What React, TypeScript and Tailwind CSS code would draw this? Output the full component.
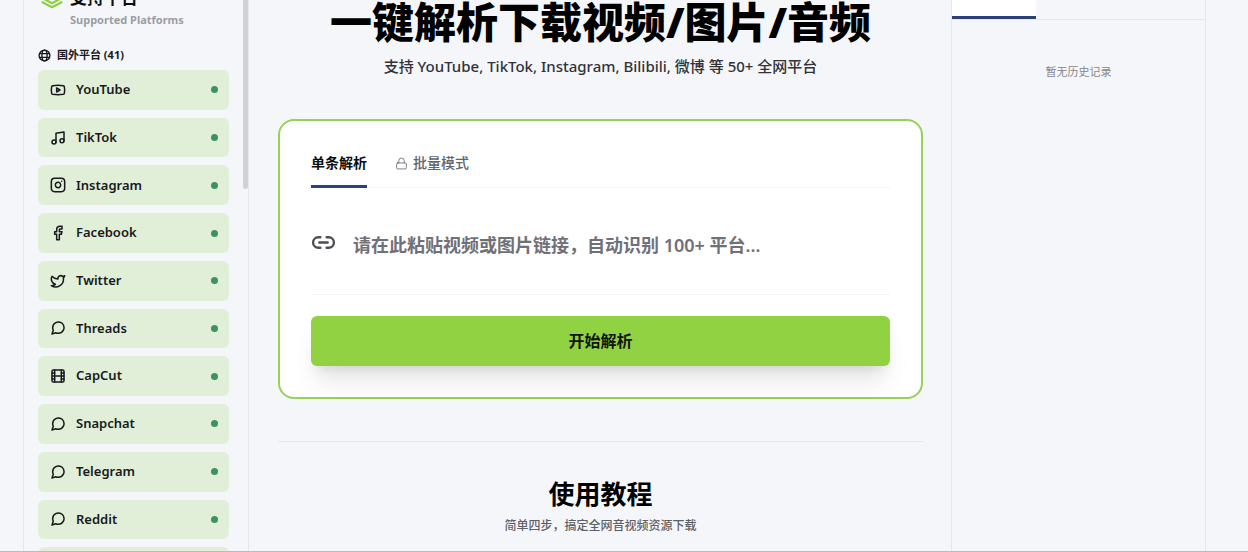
import { useState } from "react";
import { Facebook, Film, Instagram, Link2, Lock, Music, Twitter, Youtube } from "lucide-react";

type IconProps = { className?: string; strokeWidth?: number };

function ChatBubble({ className, strokeWidth = 2 }: IconProps) {
  return (
    <svg
      viewBox="0 0 24 24"
      className={className}
      fill="none"
      stroke="currentColor"
      strokeWidth={strokeWidth}
      strokeLinecap="round"
      strokeLinejoin="round"
    >
      <path d="M21 11.5a8.38 8.38 0 0 1-.9 3.8 8.5 8.5 0 0 1-7.6 4.700 8.38 8.38 0 0 1-3.800-.9L3 21l1.900-5.700a8.38 8.38 0 0 1-.9-3.800 8.5 8.5 0 0 1 4.700-7.600 8.38 8.38 0 0 1 3.800-.9h.5a8.48 8.48 0 0 1 8 8v.5z" />
    </svg>
  );
}

const platforms = [
  { name: "YouTube", Icon: Youtube },
  { name: "TikTok", Icon: Music },
  { name: "Instagram", Icon: Instagram },
  { name: "Facebook", Icon: Facebook },
  { name: "Twitter", Icon: Twitter },
  { name: "Threads", Icon: ChatBubble },
  { name: "CapCut", Icon: Film },
  { name: "Snapchat", Icon: ChatBubble },
  { name: "Telegram", Icon: ChatBubble },
  { name: "Reddit", Icon: ChatBubble },
];

function LayersLogo() {
  return (
    <svg
      viewBox="0 0 24 24"
      className="size-6 text-[#8fd043]"
      fill="none"
      stroke="currentColor"
      strokeWidth="2.2"
      strokeLinecap="round"
      strokeLinejoin="round"
    >
      <path d="M12 3 2.5 8l9.500 5 9.500-5z" />
      <path d="m2.500 12.200 9.500 5 9.500-5" />
      <path d="m2.500 16.200 9.500 5 9.500-5" />
    </svg>
  );
}

function GlobeIcon() {
  return (
    <svg viewBox="0 0 24 24" className="size-[13px]" fill="none" stroke="currentColor" strokeWidth="2.5">
      <circle cx="12" cy="12" r="10" />
      <ellipse cx="12" cy="12" rx="4.800" ry="10" />
      <path d="M3 8.500h18M3 15.500h18" />
    </svg>
  );
}

function Sidebar() {
  return (
    <aside className="relative w-[226px] shrink-0 border-x border-[#e6e7ec] pr-[19px] pl-[14px]">
      <div className="-mt-[14px] flex items-start gap-[6px] pl-[2px]">
        <LayersLogo />
        <div>
          <h2 className="text-[17px] leading-6 font-bold text-[#0c0d10]">支持平台</h2>
          <p className="text-[11px] leading-5 font-bold text-[#9b9da3]">Supported Platforms</p>
        </div>
      </div>
      <h3 className="mt-[17px] flex h-4 items-center gap-[6px] text-[11px] font-bold text-[#17191d]">
        <GlobeIcon />
        国外平台 (41)
      </h3>
      <ul className="mt-[7px] grid h-[517px] auto-rows-fr gap-2">
        {platforms.map(({ name, Icon }) => (
          <li key={name}>
            <button
              type="button"
              className="flex h-full w-full items-center gap-[10px] rounded-md bg-[#e2efd8] pr-[11px] pl-3 text-[13px] font-semibold text-[#17191d]"
            >
              <Icon className="size-4" strokeWidth={2.25} />
              <span>{name}</span>
              <span className="ml-auto size-[7px] rounded-full bg-[#3b9168]" />
            </button>
          </li>
        ))}
        <li className="rounded-md bg-[#e2efd8]" />
      </ul>
      <div className="absolute top-0 right-0 h-[189px] w-[5px] rounded-b-full bg-[#d0d1d5]" />
    </aside>
  );
}

function Parser() {
  const [link, setLink] = useState("");
  return (
    <form
      onSubmit={(event) => event.preventDefault()}
      className="mt-[41px] rounded-[16px] border-2 border-[#98d058] bg-white px-[31px] pt-[30px] pb-[31px]"
    >
      <div className="flex gap-7 border-b border-[#f3f3f5] text-sm leading-6">
        <button type="button" className="-mb-px border-b-[3px] border-[#2b3f86] pb-[10px] font-bold text-[#0c0d10]">
          单条解析
        </button>
        <button type="button" className="flex items-center gap-[5px] pb-3 font-medium text-[#62646b]">
          <Lock className="size-[13px]" strokeWidth={1.5} />
          批量模式
        </button>
      </div>
      <label className="flex h-[107px] items-center gap-[17px] border-b border-[#f3f3f5] pt-[2px]">
        <Link2 className="size-[25px] shrink-0 text-[#4c4e54]" strokeWidth={2.25} />
        <input
          type="text"
          value={link}
          onChange={(event) => setLink(event.target.value)}
          placeholder="请在此粘贴视频或图片链接，自动识别 100+ 平台..."
          className="min-w-0 flex-1 bg-transparent pt-[6px] text-lg font-semibold text-[#17191d] outline-none placeholder:text-[#707078]"
        />
      </label>
      <button
        type="submit"
        className="mt-[21px] h-[50px] w-full rounded-md bg-[#91d243] text-base font-bold text-[#10160a] shadow-xl"
      >
        开始解析
      </button>
    </form>
  );
}

function History() {
  return (
    <aside className="w-[255px] shrink-0 border-x border-[#e6e7ec]">
      <div className="flex h-5 border-b border-[#e6e7ec]">
        <button type="button" aria-label="历史记录" className="h-[19px] w-1/3 border-b-[3px] border-[#2b3f78] bg-white" />
      </div>
      <p className="mt-[42px] text-center text-[11px] leading-5 text-[#85878e]">暂无历史记录</p>
    </aside>
  );
}

export default function App() {
  return (
    <div className="h-screen overflow-hidden border-b border-[#b9babd] bg-[#f5f6fa] pr-[42px] pl-[23px] font-['Noto_Sans','Noto_Sans_CJK_SC',sans-serif]">
      <div className="flex h-full">
        <Sidebar />
        <main className="min-w-0 flex-1 pr-7 pl-[29px]">
          <h1 className="text-center text-[42px] leading-[44px] font-black text-black">
            一键解析下载视频/图片/音频
          </h1>
          <p className="mt-[10px] text-center text-[15px] leading-6 font-medium text-[#303238]">
            支持 YouTube, TikTok, Instagram, Bilibili, 微博 等 50+ 全网平台
          </p>
          <Parser />
          <section className="mt-[42px] border-t border-[#e6e7ec] pt-9 text-center">
            <h2 className="text-[26px] leading-8 font-bold text-black">使用教程</h2>
            <p className="mt-[6px] text-xs leading-5 font-medium text-[#5d5f66]">简单四步，搞定全网音视频资源下载</p>
          </section>
        </main>
        <History />
      </div>
    </div>
  );
}
